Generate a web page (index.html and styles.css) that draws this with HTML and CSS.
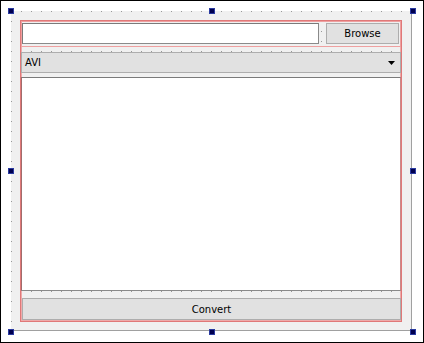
FILE: index.html
```html
<!DOCTYPE html>
<html>
<head>
  <title>Converter form</title>
  <link rel="stylesheet" href="styles.css">
</head>
<body>

  <div class="canvas">
    <div class="form">
      <div class="layout">
        <div class="file-row">
          <input type="text" class="path">
          <button class="btn browse">Browse</button>
        </div>
        <div class="combo">
          <span>AVI</span>
          <svg class="arrow" width="7" height="4" viewBox="0 0 7 4"><polygon points="0,0 7,0 3.5,4" fill="#000"/></svg>
        </div>
        <div class="list"></div>
        <button class="btn convert">Convert</button>
      </div>
    </div>

    <!-- selection handles -->
    <div class="handle" style="left:7px; top:7px"></div>
    <div class="handle" style="left:208px; top:7px"></div>
    <div class="handle" style="left:409px; top:7px"></div>
    <div class="handle" style="left:7px; top:167px"></div>
    <div class="handle" style="left:409px; top:167px"></div>
    <div class="handle" style="left:7px; top:328px"></div>
    <div class="handle" style="left:208px; top:328px"></div>
    <div class="handle" style="left:409px; top:328px"></div>
  </div>

</body>
</html>
```

FILE: styles.css
```css
body {
  margin: 0;
  font-family: "DejaVu Sans", sans-serif;
  font-size: 10px;
}

.canvas {
  position: relative;
  width: 424px;
  height: 343px;
  box-sizing: border-box;
  border: 1px solid #000;
  background: #fff;
  padding: 10px;
}

/* designer form with dot grid */
.form {
  width: 401px;
  height: 320px;
  box-sizing: border-box;
  border-right: 1px solid #a0a0a0;
  border-bottom: 1px solid #a0a0a0;
  padding: 9px 0 0 9px;
  background-color: #999;
  background-image:
    linear-gradient(to right, transparent 1px, #f0f0f0 1px),
    linear-gradient(to bottom, transparent 1px, #f0f0f0 1px);
  background-size: 10px 10px;
}

.layout {
  width: 382px;
  height: 302px;
  box-sizing: border-box;
  border: 1px solid #e07878;
  box-shadow: inset 0 0 0 1px #eeaaaa;
  display: flex;
  flex-direction: column;
}

.file-row {
  height: 26px;
  box-sizing: border-box;
  border: 1px solid #eea0a0;
  padding: 1px 1px 2px 0;
  display: flex;
  gap: 7px;
}

.path {
  width: 297px;
  height: 21px;
  box-sizing: border-box;
  margin: 0;
  border: 1px solid #7a7a7a;
  border-right-color: #8a8a8a;
  border-bottom-color: #8a8a8a;
  background: #fff;
  padding: 0;
}

.btn {
  margin: 0;
  padding: 0;
  box-sizing: border-box;
  background: #e1e1e1;
  border: 1px solid #adadad;
  font-family: "DejaVu Sans", sans-serif;
  font-size: 10px;
  color: #000;
}

.browse {
  width: 73px;
  height: 21px;
}

.combo {
  margin-top: 5px;
  height: 21px;
  box-sizing: border-box;
  background: #e1e1e1;
  border: 1px solid #adadad;
  padding: 0 5px 0 3px;
  display: flex;
  align-items: center;
  justify-content: space-between;
}

.list {
  margin-top: 4px;
  height: 214px;
  box-sizing: border-box;
  background: #fff;
  border: 1px solid #7a7a7a;
  border-left-color: #a06c6c;
  border-right-color: #c88a8a;
  border-bottom-color: #8a8a8a;
}

.convert {
  margin: 7px 0 0 1px;
  width: 379px;
  height: 22px;
}

.handle {
  position: absolute;
  width: 6px;
  height: 6px;
  box-sizing: border-box;
  background: #000050;
  border: 1px solid #2a3aa0;
}
```
